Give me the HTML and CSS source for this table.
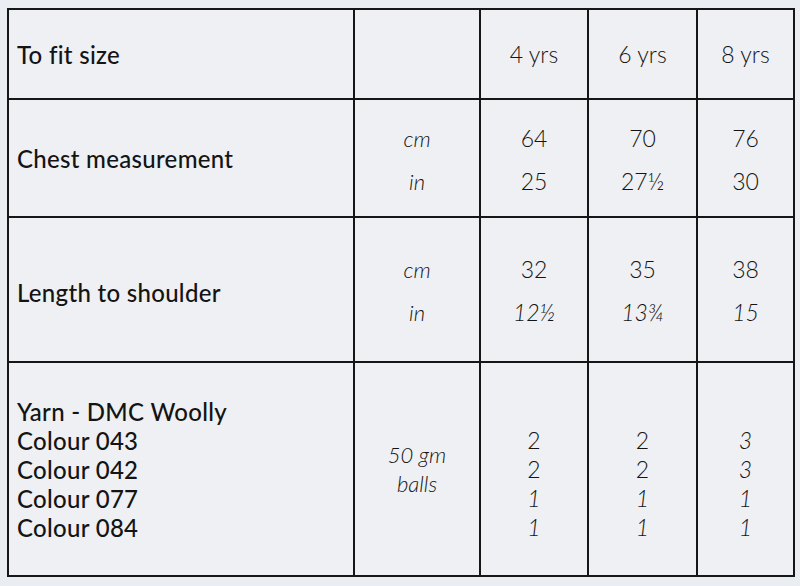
FILE: index.html
```html
<!DOCTYPE html>
<html>
<head>
<meta charset="utf-8">
<link rel="stylesheet" href="styles.css">
</head>
<body>
<table class="sizes">
  <colgroup>
    <col class="c-label"><col class="c-unit"><col class="c-4"><col class="c-6"><col class="c-8">
  </colgroup>
  <tr class="r-size">
    <td class="label">To fit size</td>
    <td></td>
    <td class="val">4 yrs</td>
    <td class="val">6 yrs</td>
    <td class="val">8 yrs</td>
  </tr>
  <tr class="r-chest">
    <td class="label">Chest measurement</td>
    <td class="unit"><div class="pair">cm<br>in</div></td>
    <td class="val"><div class="pair">64<br>25</div></td>
    <td class="val"><div class="pair">70<br>27½</div></td>
    <td class="val"><div class="pair">76<br>30</div></td>
  </tr>
  <tr class="r-length">
    <td class="label">Length to shoulder</td>
    <td class="unit"><div class="pair">cm<br>in</div></td>
    <td class="val"><div class="pair">32<br><i>12½</i></div></td>
    <td class="val"><div class="pair">35<br><i>13¾</i></div></td>
    <td class="val"><div class="pair">38<br><i>15</i></div></td>
  </tr>
  <tr class="r-yarn">
    <td class="label"><div class="list">Yarn - DMC Woolly<br>Colour 043<br>Colour 042<br>Colour 077<br>Colour 084</div></td>
    <td class="unit"><div class="list balls">50 gm<br>balls</div></td>
    <td class="val"><div class="list">&nbsp;<br>2<br>2<br><i>1</i><br><i>1</i></div></td>
    <td class="val"><div class="list">&nbsp;<br>2<br>2<br><i>1</i><br><i>1</i></div></td>
    <td class="val"><div class="list">&nbsp;<br><i>3</i><br><i>3</i><br><i>1</i><br><i>1</i></div></td>
  </tr>
</table>
</body>
</html>
```

FILE: styles.css
```css
html, body {
  margin: 0;
  padding: 0;
  background: #eaedf1;
}
body {
  padding: 8px 0 0 7px;
  font-family: Lato, "Noto Sans", sans-serif;
  color: #141414;
}
.sizes {
  border-collapse: collapse;
  width: 786px;
  background: #eef0f3;
  table-layout: fixed;
}
.sizes td {
  border: 2px solid #161616;
  padding: 0;
  vertical-align: middle;
}
.c-label { width: 346px; }
.c-unit { width: 126px; }
.c-4 { width: 108px; }
.c-6 { width: 109px; }
.c-8 { width: 97px; }

.r-size { height: 90px; }
.r-chest { height: 118px; }
.r-length { height: 145px; }
.r-yarn { height: 214px; }

.label {
  padding-left: 8px !important;
  font-size: 24px;
  font-weight: 500;
  letter-spacing: 0.3px;
}
.r-length .label { padding-top: 6px !important; }
.r-yarn .label { padding-top: 0 !important; }

.unit {
  text-align: center;
  font-style: italic;
  font-weight: 300;
  font-size: 22px;
}
.val {
  text-align: center;
  font-weight: 300;
  font-size: 23px;
}
.r-chest .pair { margin-top: 4px; }
.r-length .pair { margin-top: 2px; }
.pair {
  line-height: 43px;
}
.list {
  line-height: 29px;
}
.balls {
  font-size: 22px;
}
i { font-style: italic; }
```
